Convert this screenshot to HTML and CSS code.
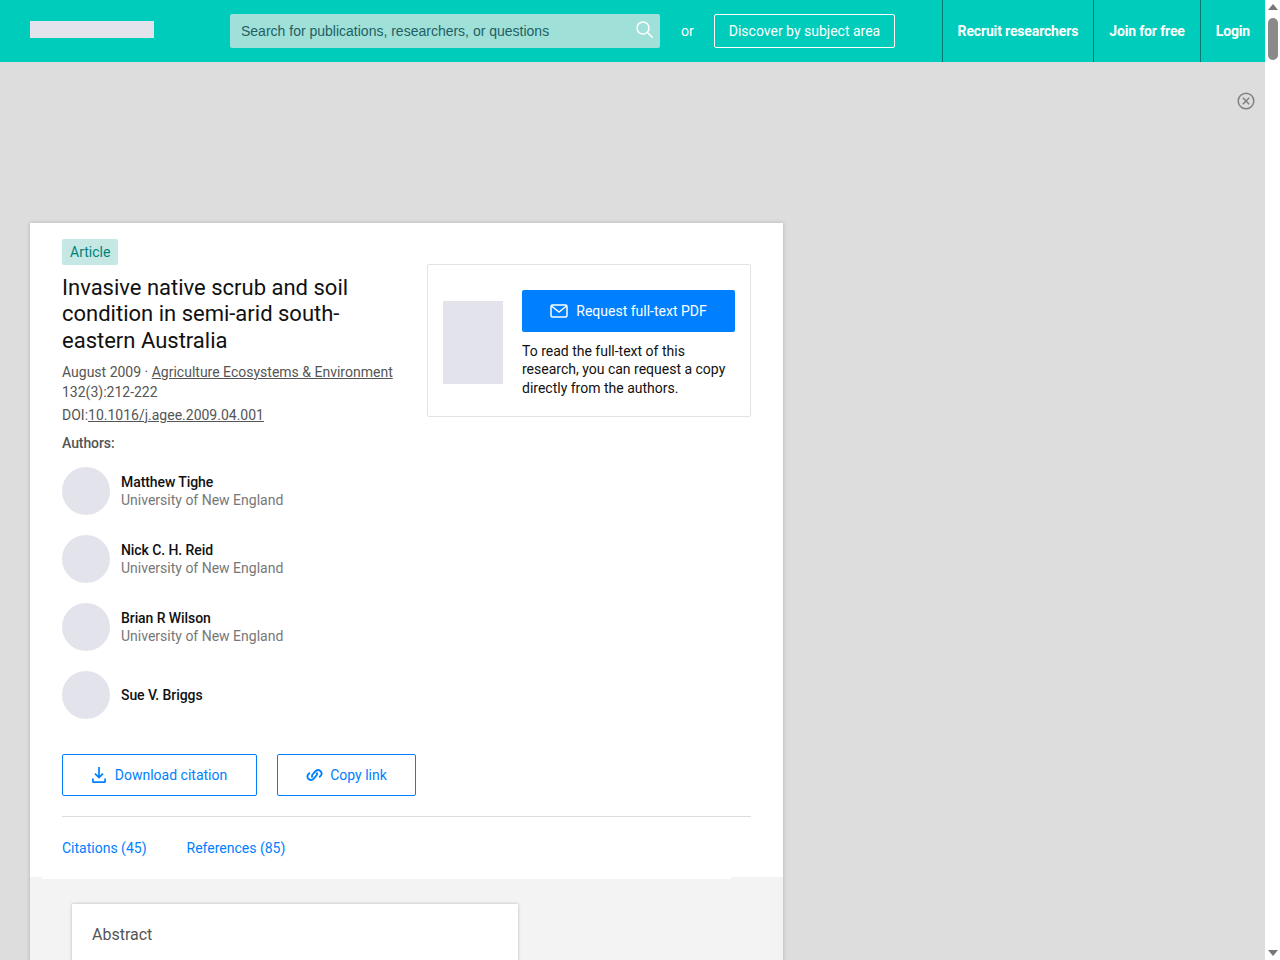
FILE: index.html
```html
<!DOCTYPE html>
<html lang="en">
<head>
  <meta charset="UTF-8">
  <title>Invasive native scrub and soil condition in semi-arid south-eastern Australia</title>
  <link rel="stylesheet" href="styles.css">
</head>
<body>
  <div class="page">
    <div class="main">
      <header class="topbar">
        <div class="logo"></div>
        <div class="search">
          <span class="search-text">Search for publications, researchers, or questions</span>
          <svg class="search-icon" width="17" height="17" viewBox="0 0 17 17" fill="none" stroke="#fff" stroke-width="1.5">
            <circle cx="7" cy="7" r="6"/>
            <path d="M11.3 11.3 16.2 16.2" stroke-linecap="round"/>
          </svg>
        </div>
        <span class="or">or</span>
        <a class="discover">Discover by subject area</a>
        <nav class="nav">
          <a class="nav-link">Recruit researchers</a>
          <a class="nav-link">Join for free</a>
          <a class="nav-link">Login</a>
        </nav>
      </header>

      <div class="ad">
        <svg class="ad-close" width="18" height="18" viewBox="0 0 18 18" fill="none" stroke="#808080" stroke-width="1.5">
          <circle cx="9" cy="9" r="7.8"/>
          <path d="M5.8 5.8 12.2 12.2M12.2 5.8 5.8 12.2"/>
        </svg>
      </div>

      <article class="card">
        <div class="card-top">
          <div class="hero">
            <div class="hero-left">
              <span class="tag">Article</span>
              <h1 class="title">Invasive native scrub and soil condition in semi-arid south-eastern Australia</h1>
              <p class="meta">August 2009 · <a class="meta-link">Agriculture Ecosystems &amp; Environment</a><br>132(3):212-222</p>
              <p class="doi">DOI:<a class="meta-link">10.1016/j.agee.2009.04.001</a></p>
              <h2 class="authors-label">Authors:</h2>
              <ul class="authors">
                <li class="author">
                  <div class="avatar"></div>
                  <div><div class="author-name">Matthew Tighe</div><div class="author-org">University of New England</div></div>
                </li>
                <li class="author">
                  <div class="avatar"></div>
                  <div><div class="author-name">Nick C. H. Reid</div><div class="author-org">University of New England</div></div>
                </li>
                <li class="author">
                  <div class="avatar"></div>
                  <div><div class="author-name">Brian R Wilson</div><div class="author-org">University of New England</div></div>
                </li>
                <li class="author">
                  <div class="avatar"></div>
                  <div><div class="author-name">Sue V. Briggs</div></div>
                </li>
              </ul>
            </div>
            <aside class="request">
              <div class="thumb"></div>
              <div class="request-body">
                <a class="request-btn">
                  <svg width="18" height="14" viewBox="0 0 18 14" fill="none" stroke="#fff" stroke-width="1.5">
                    <rect x="1" y="1" width="16" height="12" rx="1.5"/>
                    <path d="M1.5 2 9 8l7.5-6"/>
                  </svg>
                  Request full-text PDF
                </a>
                <p class="request-text">To read the full-text of this research, you can request a copy directly from the authors.</p>
              </div>
            </aside>
          </div>
          <div class="actions">
            <a class="btn btn-citation">
              <svg width="14" height="16" viewBox="0 0 14 16" fill="none" stroke="#0080ff" stroke-width="1.7">
                <path d="M7 0v10.5M3 6.6 7 10.6 11 6.6"/>
                <path d="M.9 11.5v2.9a.7.7 0 0 0 .7.7h10.8a.7.7 0 0 0 .7-.7v-2.9"/>
              </svg>
              Download citation
            </a>
            <a class="btn btn-copy">
              <svg width="17" height="14" viewBox="0.7 0.5 16.6 13" fill="none" stroke="#0080ff" stroke-width="1.8">
                <path d="M7 9.5a3 3 0 0 1 .8-3.8l2.6-2.8a3.4 3.4 0 0 1 5 4.4l-1.8 2"/>
                <path d="M11 4.5a3 3 0 0 1-.8 3.8l-2.6 2.8a3.4 3.4 0 0 1-5-4.4l1.8-2"/>
              </svg>
              Copy link
            </a>
          </div>
        </div>
        <div class="tabs">
          <a class="tab">Citations (45)</a>
          <a class="tab">References (85)</a>
        </div>
        <div class="content">
          <section class="abstract">
            <h3 class="abstract-title">Abstract</h3>
          </section>
        </div>
      </article>
    </div>

    <div class="scrollbar">
      <div class="arrow-up"></div>
      <div class="thumb-bar"></div>
      <div class="arrow-down"></div>
    </div>
  </div>
</body>
</html>
```

FILE: styles.css
```css
* {
  box-sizing: border-box;
}
html, body {
  margin: 0;
  height: 100%;
  overflow: hidden;
}
body {
  font-family: Roboto, Arial, sans-serif;
  font-size: 14px;
  color: #111;
  background-color: #fff;
}
a {
  cursor: pointer;
}
.page {
  display: flex;
  height: 960px;
}
.main {
  flex: 1;
  min-width: 0;
  background-color: #ddd;
  overflow: hidden;
}

/* top bar */
.topbar {
  display: flex;
  align-items: center;
  height: 62px;
  padding-left: 30px;
  background-color: #00ccbb;
  color: #fff;
  white-space: nowrap;
}
.logo {
  flex: none;
  width: 124px;
  height: 17px;
  margin-bottom: 3px;
  background-color: #e3e3ec;
}
.search {
  flex: none;
  display: flex;
  align-items: center;
  justify-content: space-between;
  width: 430px;
  height: 34px;
  margin-left: 76px;
  padding: 0 7px 0 11px;
  background-color: #9fe0d9;
  border-radius: 2px;
}
.search-text {
  font-family: "Liberation Sans", Arial, sans-serif;
  color: #1f5f63;
}
.search-icon {
  margin-bottom: 3px;
}
.or {
  margin-left: 21px;
}
.discover {
  display: flex;
  align-items: center;
  height: 34px;
  margin-left: 20px;
  padding: 0 14px;
  border: 1px solid #fff;
  border-radius: 2px;
}
.nav {
  display: flex;
  height: 62px;
  margin-left: auto;
}
.nav-link {
  display: flex;
  align-items: center;
  padding: 0 15px;
  border-left: 1px solid #00786f;
  font-weight: 700;
  letter-spacing: -0.15px;
}

/* ad slot */
.ad {
  display: flex;
  justify-content: flex-end;
  height: 161px;
  padding: 30px 10px 0 0;
}

/* article card */
.card {
  width: 753px;
  height: 800px;
  margin-left: 30px;
  background-color: #fff;
  box-shadow: 0 0 4px rgba(0, 0, 0, 0.2);
}
.card-top {
  padding: 16px 32px 0;
}
.hero {
  display: flex;
  justify-content: space-between;
}
.hero-left {
  width: 340px;
}
.tag {
  display: inline-block;
  height: 26px;
  padding: 0 8px;
  line-height: 26px;
  background-color: #c5e8e4;
  color: #00817a;
  border-radius: 2px;
}
.title {
  margin: 9.7px 0 0;
  font-size: 22px;
  font-weight: 400;
  line-height: 26.5px;
  color: #111;
}
.meta {
  margin: 7.5px 0 0;
  line-height: 20.5px;
  color: #555;
  white-space: nowrap;
}
.meta-link {
  text-decoration: underline;
}
.doi {
  margin: 2px 0 0;
  line-height: 20px;
  color: #555;
}
.authors-label {
  margin: 8px 0 0;
  font-size: 14px;
  font-weight: 500;
  line-height: 20px;
  letter-spacing: -0.08px;
  color: #555;
}
.authors {
  display: flex;
  flex-direction: column;
  gap: 20px;
  margin: 14px 0 0;
  padding: 0;
  list-style: none;
}
.author {
  display: flex;
  align-items: center;
  gap: 11px;
  height: 48px;
}
.avatar {
  width: 48px;
  height: 48px;
  border-radius: 50%;
  background-color: #e3e3ec;
}
.author-name {
  font-weight: 500;
  line-height: 18px;
  letter-spacing: -0.08px;
  color: #111;
}
.author-org {
  line-height: 18px;
  color: #777;
}

/* request box */
.request {
  display: flex;
  align-items: flex-start;
  gap: 19px;
  width: 324px;
  height: 153px;
  margin-top: 25px;
  padding: 25px 15px 0;
  border: 1px solid #e3e3e3;
  border-radius: 2px;
}
.thumb {
  flex: none;
  width: 60px;
  height: 83px;
  margin-top: 11px;
  background-color: #e3e3ec;
}
.request-btn {
  display: flex;
  align-items: center;
  justify-content: center;
  gap: 8px;
  height: 42px;
  background-color: #0080ff;
  color: #fff;
  border-radius: 2px;
}
.request-text {
  margin: 9.7px 0 0;
  line-height: 18.5px;
  color: #111;
}

/* buttons */
.actions {
  display: flex;
  gap: 20px;
  margin-top: 35px;
  padding-bottom: 20px;
  border-bottom: 1px solid #ddd;
}
.btn {
  display: flex;
  align-items: center;
  justify-content: center;
  gap: 9px;
  height: 42px;
  border: 1px solid #0080ff;
  border-radius: 2px;
  color: #0080ff;
}
.btn-citation {
  width: 195px;
}
.btn-copy {
  gap: 7px;
  width: 139px;
}

/* tabs and content */
.tabs {
  position: relative;
  display: flex;
  gap: 40px;
  height: 62px;
  margin: 0 52px 0 12px;
  padding: 22px 0 0 20px;
  background-color: #fff;
  line-height: 18px;
  color: #0080ff;
}
.content {
  height: 400px;
  margin-top: -2px;
  padding: 27px 0 0 42px;
  background-color: #f3f3f3;
}
.abstract {
  width: 446px;
  height: 200px;
  padding: 21px 20px;
  background-color: #fff;
  box-shadow: 0 0 3px rgba(0, 0, 0, 0.25);
}
.abstract-title {
  margin: 0;
  font-size: 16px;
  font-weight: 400;
  line-height: 20px;
  color: #555;
}

/* scrollbar */
.scrollbar {
  position: relative;
  flex: none;
  width: 15px;
  background-color: #fff;
}
.arrow-up,
.arrow-down {
  position: absolute;
  left: 3px;
  width: 0;
  height: 0;
  border-left: 5px solid transparent;
  border-right: 5px solid transparent;
}
.arrow-up {
  top: 4px;
  border-bottom: 6px solid #777;
}
.arrow-down {
  bottom: 4px;
  border-top: 6px solid #777;
}
.thumb-bar {
  position: absolute;
  top: 18px;
  left: 3px;
  width: 10px;
  height: 42px;
  background-color: #8a8a8a;
  border-radius: 5px;
}
```
